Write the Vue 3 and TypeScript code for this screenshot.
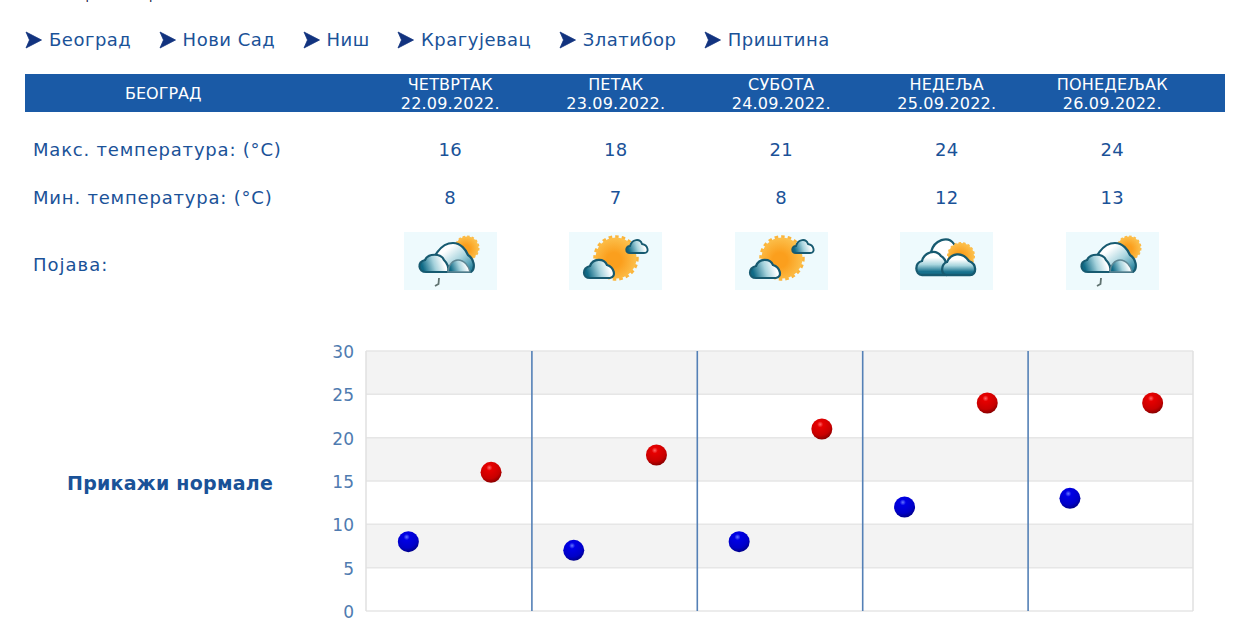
<script setup lang="ts">
type IconKind = 'rain' | 'sunny' | 'cloudy'

interface Day {
  name: string
  date: string
  max: number
  min: number
  icon: IconKind
}

const cities = ['Београд', 'Нови Сад', 'Ниш', 'Крагујевац', 'Златибор', 'Приштина']

const days: Day[] = [
  { name: 'ЧЕТВРТАК', date: '22.09.2022.', max: 16, min: 8, icon: 'rain' },
  { name: 'ПЕТАК', date: '23.09.2022.', max: 18, min: 7, icon: 'sunny' },
  { name: 'СУБОТА', date: '24.09.2022.', max: 21, min: 8, icon: 'sunny' },
  { name: 'НЕДЕЉА', date: '25.09.2022.', max: 24, min: 12, icon: 'cloudy' },
  { name: 'ПОНЕДЕЉАК', date: '26.09.2022.', max: 24, min: 13, icon: 'rain' },
]

// chart geometry, in px of the svg below
const plotLeft = 41
const plotRight = 868
const plotTop = 11
const plotBottom = 271
const step = (plotBottom - plotTop) / 30
const dayWidth = (plotRight - plotLeft) / 5

const ticks = [0, 5, 10, 15, 20, 25, 30]
const yOf = (v: number) => plotBottom - v * step
const bands = [30, 20, 10]
const dividers = [1, 2, 3, 4].map((i) => plotLeft + i * dayWidth + 0.5)
const minX = (i: number) => plotLeft + dayWidth * (i + 0.25) + 1
const maxX = (i: number) => plotLeft + dayWidth * (i + 0.75) + 1
</script>

<template>
  <div class="page">
    <div class="clipped"><span>Прогноза времена</span></div>

    <nav class="cities">
      <a v-for="city in cities" :key="city" class="city">
        <svg class="arrow" width="17" height="18" viewBox="0 0 17 18">
          <path d="M1 1 L16.5 9 L1 17 L4.5 9 Z" fill="#12337f" stroke="#12337f" stroke-width="0.8" />
        </svg>
        {{ city }}
      </a>
    </nav>

    <div class="forecast">
      <div class="head first">БЕОГРАД</div>
      <div v-for="d in days" :key="d.date" class="head">
        <div>{{ d.name }}</div>
        <div>{{ d.date }}</div>
      </div>
      <div class="head spare"></div>

      <div class="label row-max">Макс. температура: (°C)</div>
      <div v-for="d in days" :key="d.date + 'max'" class="val row-max">{{ d.max }}</div>
      <div class="row-max"></div>

      <div class="label">Мин. температура: (°C)</div>
      <div v-for="d in days" :key="d.date + 'min'" class="val">{{ d.min }}</div>
      <div></div>

      <div class="label row-icon">Појава:</div>
      <div v-for="d in days" :key="d.date + 'icon'" class="val">
        <svg class="wx" width="93" height="58" viewBox="0 0 93 58">
          <defs>
            <linearGradient id="cloudDown" x1="0" y1="0" x2="0" y2="1">
              <stop offset="0.25" stop-color="#ffffff" />
              <stop offset="0.55" stop-color="#a8d5de" />
              <stop offset="0.85" stop-color="#17718d" />
            </linearGradient>
            <linearGradient id="cloudBack" x1="0.2" y1="0.1" x2="1" y2="0.8">
              <stop offset="0.2" stop-color="#ffffff" />
              <stop offset="0.6" stop-color="#a9d5df" />
              <stop offset="1" stop-color="#2f88a2" />
            </linearGradient>
            <linearGradient id="cloudSide" x1="0" y1="0.6" x2="1" y2="0.4">
              <stop offset="0.08" stop-color="#0f6a86" />
              <stop offset="0.5" stop-color="#a5d2dc" />
              <stop offset="0.85" stop-color="#ffffff" />
            </linearGradient>
            <radialGradient id="sunFill" cx="0.45" cy="0.55" r="0.6">
              <stop offset="0.3" stop-color="#fb9f1d" />
              <stop offset="1" stop-color="#fcc452" />
            </radialGradient>
          </defs>
          <rect width="93" height="58" fill="#eefafd" />

          <g v-if="d.icon === 'rain'">
            <circle cx="63" cy="16" r="11.5" fill="none" stroke="#fdba45" stroke-width="2" stroke-dasharray="2.5 2" />
            <circle cx="63" cy="16" r="11.5" fill="url(#sunFill)" />
            <path d="M27 40 C27 25 37 11 49 11 C57 11 62 18 64 23 C70 27 72 36 67 40 Z" fill="url(#cloudBack)" stroke="#175a70" stroke-width="2.2" />
            <path d="M22 40 C14 40 13 30 21 28 C24 21 37 21 40 28 C43 31 45 36 44 40 Z" fill="url(#cloudSide)" stroke="#175a70" stroke-width="2.2" />
            <path d="M44 40 C44 33 49 28 54 28 C60 28 65 34 66 40 Z" fill="url(#cloudSide)" stroke="#5f8794" stroke-width="1.5" />
            <path d="M35 46 L34.5 52 L31 54" fill="none" stroke="#5f7270" stroke-width="1.8" />
          </g>

          <g v-else-if="d.icon === 'sunny'">
            <circle cx="47" cy="26" r="21" fill="none" stroke="#fbb53c" stroke-width="3.5" stroke-dasharray="3.5 3" />
            <circle cx="47" cy="26" r="20.5" fill="url(#sunFill)" />
            <path d="M61 21 C56 21 56 14 61 14 C63 7 71 6 73 12 C79 13 81 21 75 21 Z" fill="url(#cloudSide)" stroke="#175a70" stroke-width="1.9" />
            <path d="M21 46 C13 46 13 36 21 34 C24 26 35 26 38 33 C45 35 48 45 41 46 Z" fill="url(#cloudSide)" stroke="#175a70" stroke-width="2.2" />
          </g>

          <g v-else>
            <path d="M31 20 C34 8 48 3 54 12 L62 22 L50 42 L30 42 Z" fill="#ffffff" stroke="#175a70" stroke-width="2.2" />
            <circle cx="61" cy="24" r="13" fill="none" stroke="#fdba45" stroke-width="2" stroke-dasharray="2.5 2" />
            <circle cx="61" cy="24" r="13" fill="url(#sunFill)" />
            <path d="M22 43 C15 43 14 31 22 29 C24 21 35 16 41 24 C47 27 48 38 46 43 Z" fill="url(#cloudDown)" stroke="#175a70" stroke-width="2.3" />
            <path d="M47 43 C40 43 41 32 47 30 C51 21 62 19 69 29 C77 32 77 43 70 43 Z" fill="url(#cloudDown)" stroke="#175a70" stroke-width="2.3" />
          </g>
        </svg>
      </div>
      <div></div>
    </div>

    <div class="lower">
      <a class="normals">Прикажи нормале</a>
      <svg class="chart" width="900" height="292" viewBox="0 0 900 292">
        <defs>
          <radialGradient id="ballRed" cx="0.42" cy="0.28" r="0.8">
            <stop offset="0" stop-color="#f66" />
            <stop offset="0.18" stop-color="#e60000" />
            <stop offset="0.65" stop-color="#c80000" />
            <stop offset="1" stop-color="#700000" />
          </radialGradient>
          <radialGradient id="ballBlue" cx="0.42" cy="0.28" r="0.8">
            <stop offset="0" stop-color="#6677ff" />
            <stop offset="0.18" stop-color="#0000e6" />
            <stop offset="0.65" stop-color="#0000c8" />
            <stop offset="1" stop-color="#000070" />
          </radialGradient>
        </defs>

        <rect
          v-for="b in bands"
          :key="b"
          :x="plotLeft"
          :y="yOf(b)"
          :width="plotRight - plotLeft"
          :height="5 * step"
          fill="#f3f3f3"
        />
        <line
          v-for="t in ticks"
          :key="'g' + t"
          :x1="plotLeft"
          :x2="plotRight"
          :y1="yOf(t)"
          :y2="yOf(t)"
          stroke="#e6e6e6"
          stroke-width="1.5"
        />
        <line :x1="plotLeft" :x2="plotLeft" :y1="plotTop" :y2="plotBottom" stroke="#e0e0e0" stroke-width="1.5" />
        <line :x1="plotRight" :x2="plotRight" :y1="plotTop" :y2="plotBottom" stroke="#e0e0e0" stroke-width="1.5" />
        <line
          v-for="x in dividers"
          :key="x"
          :x1="x"
          :x2="x"
          :y1="plotTop"
          :y2="plotBottom"
          stroke="#5480b6"
          stroke-width="1.6"
        />
        <text
          v-for="t in ticks"
          :key="'t' + t"
          class="tick"
          x="29"
          :y="yOf(t) + 7"
          text-anchor="end"
        >{{ t }}</text>

        <template v-for="(d, i) in days" :key="d.date">
          <circle :cx="minX(i)" :cy="yOf(d.min)" r="10.5" fill="url(#ballBlue)" />
          <circle :cx="maxX(i)" :cy="yOf(d.max)" r="10.5" fill="url(#ballRed)" />
        </template>
      </svg>
    </div>
  </div>
</template>

<style scoped>
.page {
  width: 1251px;
  height: 632px;
  overflow: hidden;
  background: #fff;
  font-family: "DejaVu Sans", Verdana, sans-serif;
  color: #1a5298;
}

/* only the tails of the line above the fold are visible */
.clipped {
  height: 2px;
  padding-left: 76px;
  overflow: hidden;
  display: flex;
  align-items: flex-end;
  font-size: 12.5px;
  color: #14143c;
}

.cities {
  display: flex;
  gap: 27.3px;
  padding: 24px 0 0 25px;
  height: 72px;
  box-sizing: border-box;
  align-items: flex-start;
  font-size: 18px;
  line-height: 28px;
}

.city {
  display: flex;
  align-items: center;
  gap: 7px;
  letter-spacing: 0.5px;
}

.arrow {
  filter: blur(0.35px);
}

.forecast {
  margin-left: 25px;
  width: 1200px;
  display: grid;
  grid-template-columns: 342.5px repeat(5, 165.5px) 30px;
  grid-template-rows: 38px 62px 46px 82px;
}

.head {
  background: #1a5aa6;
  color: #fff;
  font-size: 16px;
  line-height: 18.5px;
  letter-spacing: 0.2px;
  text-align: center;
  padding-top: 2px;
  box-sizing: border-box;
}

.head.first {
  line-height: 39px;
  padding: 0 66px 0 0;
  letter-spacing: 0;
}

.label,
.val {
  display: flex;
  align-items: center;
  font-size: 18px;
}

.label {
  padding-left: 8px;
  letter-spacing: 0.8px;
}

.label.row-icon {
  padding-top: 6px;
  letter-spacing: 1px;
}

.val {
  justify-content: center;
  letter-spacing: 0.4px;
}

.row-max {
  padding-top: 12px;
}

.wx {
  filter: blur(0.4px);
}

.lower {
  display: flex;
  margin-top: 38px;
  align-items: flex-start;
}

.normals {
  width: 325px;
  flex-shrink: 0;
  padding: 131px 0 0 67px;
  box-sizing: border-box;
  font-size: 19px;
  line-height: 24px;
  font-weight: bold;
  letter-spacing: 0.25px;
}

.chart {
  display: block;
}

.tick {
  font-size: 17px;
  fill: #4f7bb0;
}
</style>
